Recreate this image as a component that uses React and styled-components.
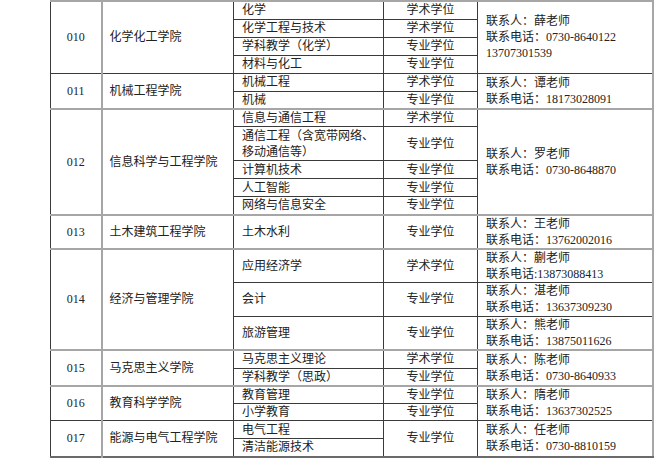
import React from 'react';
import styled, { createGlobalStyle, css } from 'styled-components';

const GlobalStyle = createGlobalStyle`
  html, body {
    margin: 0;
    padding: 0;
    background: #ffffff;
  }
  body {
    width: 666px;
    height: 462px;
    overflow: hidden;
    font-family: "Liberation Serif", "Noto Sans CJK SC", serif;
    font-size: 12px;
    color: #222222;
  }
`;

const Page = styled.div`
  padding: 0 0 0 50px;
`;

const Table = styled.table`
  border-collapse: collapse;
  table-layout: fixed;
  width: 602px;
  border-top: 2px solid #a6a6a6;
  border-left: 1px solid #3a3a3a;
  border-right: 2px solid #a6a6a6;
  border-bottom: 2px solid #6a6a6a;
`;

const Col = styled.col`
  width: ${p => p.$w}px;
`;

const Row = styled.tr`
  height: ${p => p.$h}px;

  ${p => p.$sep === 'gray' && css`
    & > td { border-top: 2px solid #a6a6a6; }
  `}
  ${p => p.$sep === 'dark' && css`
    & > td { border-top: 1px solid #3a3a3a; }
  `}
`;

const Cell = styled.td`
  border: 1px solid #3a3a3a;
  padding: 0 8px;
  line-height: 16px;
  vertical-align: middle;
  white-space: normal;
  word-break: break-all;
`;

const CodeCell = styled(Cell)`
  text-align: center;
  border-right: 2px solid #a6a6a6;
  padding: 0;
`;

const NameCell = styled(Cell)`
  text-align: left;
  padding-left: 7px;
`;

const MajorCell = styled(Cell)`
  padding-left: 8px;
  padding-right: 6px;
`;

const TypeCell = styled(Cell)`
  text-align: center;
  padding: 0;
`;

const ContactCell = styled(Cell)`
  padding-left: 8px;
  padding-right: 4px;
`;

const groups = [
  {
    code: '010', name: '化学化工学院', sep: 'none',
    majors: [['化学', 18], ['化学工程与技术', 18], ['学科教学（化学）', 18], ['材料与化工', 18]],
    types: [['学术学位', 1], ['学术学位', 1], ['专业学位', 1], ['专业学位', 1]],
    contacts: [[['联系人：薛老师', '联系电话：0730-8640122', '13707301539'], 4]],
  },
  {
    code: '011', name: '机械工程学院', sep: 'dark',
    majors: [['机械工程', 18], ['机械', 17]],
    types: [['学术学位', 1], ['专业学位', 1]],
    contacts: [[['联系人：谭老师', '联系电话：18173028091'], 2]],
  },
  {
    code: '012', name: '信息科学与工程学院', sep: 'gray',
    majors: [
      ['信息与通信工程', 18],
      ['通信工程（含宽带网络、移动通信等）', 34],
      ['计算机技术', 18],
      ['人工智能', 18],
      ['网络与信息安全', 18],
    ],
    types: [['学术学位', 1], ['专业学位', 1], ['专业学位', 1], ['专业学位', 1], ['专业学位', 1]],
    contacts: [[['联系人：罗老师', '联系电话：0730-8648870'], 5]],
  },
  {
    code: '013', name: '土木建筑工程学院', sep: 'gray',
    majors: [['土木水利', 34]],
    types: [['专业学位', 1]],
    contacts: [[['联系人：王老师', '联系电话：13762002016'], 1]],
  },
  {
    code: '014', name: '经济与管理学院', sep: 'gray',
    majors: [['应用经济学', 33], ['会计', 34], ['旅游管理', 34]],
    types: [['学术学位', 1], ['专业学位', 1], ['专业学位', 1]],
    contacts: [
      [['联系人：蒯老师', '联系电话:13873088413'], 1],
      [['联系人：湛老师', '联系电话：13637309230'], 1],
      [['联系人：熊老师', '联系电话：13875011626'], 1],
    ],
  },
  {
    code: '015', name: '马克思主义学院', sep: 'gray',
    majors: [['马克思主义理论', 18], ['学科教学（思政）', 17]],
    types: [['学术学位', 1], ['专业学位', 1]],
    contacts: [[['联系人：陈老师', '联系电话：0730-8640933'], 2]],
  },
  {
    code: '016', name: '教育科学学院', sep: 'gray',
    majors: [['教育管理', 18], ['小学教育', 17]],
    types: [['专业学位', 1], ['专业学位', 1]],
    contacts: [[['联系人：隋老师', '联系电话：13637302525'], 2]],
  },
  {
    code: '017', name: '能源与电气工程学院', sep: 'dark',
    majors: [['电气工程', 18], ['清洁能源技术', 18]],
    types: [['专业学位', 2]],
    contacts: [[['联系人：任老师', '联系电话：0730-8810159'], 2]],
  },
];

// row index -> [item, span] for the cells that start on that row
const startsAt = list => {
  const out = {};
  let i = 0;
  list.forEach(([item, span]) => {
    out[i] = [item, span];
    i += span;
  });
  return out;
};

const Group = ({ g }) => {
  const types = startsAt(g.types);
  const contacts = startsAt(g.contacts);
  const n = g.majors.length;

  return g.majors.map(([major, h], i) => (
    <Row key={g.code + i} $h={h} $sep={i === 0 ? g.sep : undefined}>
      {i === 0 && <CodeCell rowSpan={n}>{g.code}</CodeCell>}
      {i === 0 && <NameCell rowSpan={n}>{g.name}</NameCell>}
      <MajorCell>{major}</MajorCell>
      {types[i] && <TypeCell rowSpan={types[i][1]}>{types[i][0]}</TypeCell>}
      {contacts[i] && (
        <ContactCell rowSpan={contacts[i][1]}>
          {contacts[i][0].map((line, k) => (
            <div key={k}>{line}</div>
          ))}
        </ContactCell>
      )}
    </Row>
  ));
};

export default function App() {
  return (
    <>
      <GlobalStyle />
      <Page>
        <Table>
          <colgroup>
            <Col $w={51} />
            <Col $w={132} />
            <Col $w={150} />
            <Col $w={94} />
            <Col $w={175} />
          </colgroup>
          <tbody>
            {groups.map(g => (
              <Group key={g.code} g={g} />
            ))}
          </tbody>
        </Table>
      </Page>
    </>
  );
}
